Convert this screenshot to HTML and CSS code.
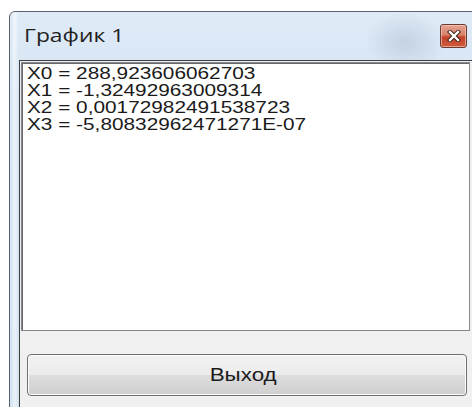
FILE: index.html
```html
<!DOCTYPE html>
<html lang="ru">
<head>
<meta charset="utf-8">
<title>График 1</title>
<link rel="stylesheet" href="styles.css">
</head>
<body>
<div class="window">
  <div class="titlebar">
    <span class="caption">График 1</span>
    <button class="close" aria-label="Закрыть">
      <svg width="14" height="12" viewBox="0 0 14 12">
        <path d="M3 2 L11 10 M11 2 L3 10" stroke="#3a1a14" stroke-width="4.2" stroke-linecap="square"/>
        <path d="M3 2 L11 10 M11 2 L3 10" stroke="#ffffff" stroke-width="2.4" stroke-linecap="square"/>
      </svg>
    </button>
  </div>
  <div class="client">
    <div class="textbox">
      <div class="line">X0 = 288,923606062703</div>
      <div class="line">X1 = -1,32492963009314</div>
      <div class="line">X2 = 0,00172982491538723</div>
      <div class="line">X3 = -5,80832962471271E-07</div>
    </div>
    <button class="exit"><span class="exit-label">Выход</span></button>
  </div>
</div>
</body>
</html>
```

FILE: styles.css
```css
html, body {
  margin: 0;
  padding: 0;
  background: #ffffff;
  overflow: hidden;
  width: 472px;
  height: 407px;
}

.window {
  box-sizing: border-box;
  margin: 11px 0 0 9px;
  width: 490px;
  height: 410px;
  border: 1px solid #5b6470;
  border-radius: 6px 0 0 0;
  padding: 0 10px 0 9px;
  background:
    linear-gradient(90deg, transparent 2px, rgba(255, 255, 255, 0.45) 3px, rgba(255, 255, 255, 0.45) 6px, transparent 8px),
    radial-gradient(ellipse 40px 30px at 395px 30px, rgba(150, 170, 190, 0.35), transparent),
    linear-gradient(180deg, #dfeaf6 0%, #d6e5f4 20%, #d3e3f3 100%);
  display: flex;
  flex-direction: column;
}

.titlebar {
  height: 48px;
  display: flex;
  align-items: center;
  justify-content: space-between;
}

.caption {
  display: inline-block;
  font-family: "Open Sans", "Noto Sans", sans-serif;
  font-size: 18px;
  color: #1f1f1f;
  margin-left: 5px;
  padding-bottom: 2px;
  transform: scaleX(1.27);
  transform-origin: left center;
}

.close {
  box-sizing: border-box;
  width: 27px;
  height: 24px;
  margin-right: 21px;
  margin-bottom: 1px;
  padding: 0;
  border: 1px solid #6b3a30;
  border-radius: 3px;
  background: linear-gradient(180deg, #e4a291 0%, #d8826b 45%, #c2432a 55%, #cf5a3b 100%);
  box-shadow: inset 0 0 0 1px rgba(255, 210, 195, 0.6);
  display: flex;
  align-items: center;
  justify-content: center;
}

.client {
  flex: 1;
  border: 1px solid #3e3e3e;
  border-bottom: 2px solid #3e3e3e;
  background: #f0f0f0;
  display: flex;
  flex-direction: column;
  margin-bottom: 6px;
}

.textbox {
  box-sizing: border-box;
  width: 449px;
  height: 269px;
  margin: 1px 0 0 1px;
  border: 1px solid #828790;
  box-shadow: inset 1px 1px 0 #696969;
  background: #ffffff;
  padding: 2px 5px;
  font-family: "Liberation Sans", Arial, sans-serif;
  font-size: 16.5px;
  line-height: 17px;
  color: #1a1a1a;
}

.line {
  transform: scaleX(1.26);
  transform-origin: left center;
  white-space: nowrap;
}

.exit {
  box-sizing: border-box;
  margin: 23px 0 0 7px;
  width: 440px;
  height: 42px;
  border: 1px solid #707070;
  border-radius: 4px;
  background: linear-gradient(180deg, #f2f2f2 0%, #ebebeb 50%, #dddddd 50%, #cfcfcf 100%);
  box-shadow: inset 0 0 0 1px #fcfcfc;
  padding: 0 8px 0 0;
}

.exit-label {
  display: inline-block;
  font-family: "Liberation Sans", Arial, sans-serif;
  font-size: 17.5px;
  color: #1a1a1a;
  transform: scaleX(1.28);
}
```
